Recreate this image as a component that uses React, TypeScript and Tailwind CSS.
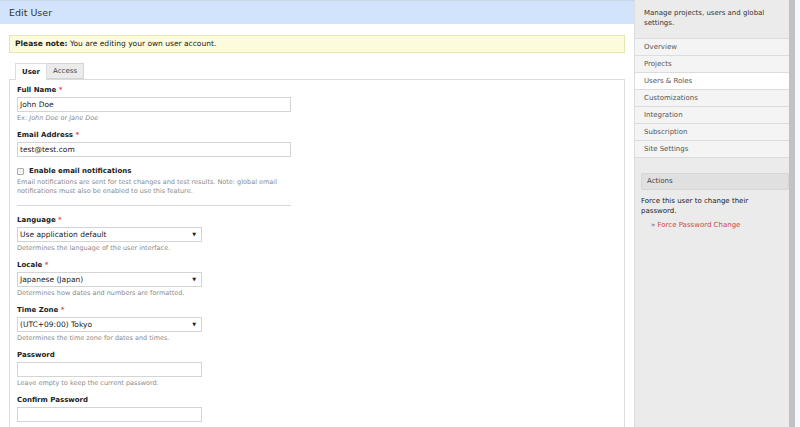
import React from 'react'

const navItems = ['Overview', 'Projects', 'Users & Roles', 'Customizations', 'Integration', 'Subscription', 'Site Settings']

const Label: React.FC<{ text: string; required?: boolean }> = ({ text, required }) => (
  <div className="text-[7px] leading-[9px] font-bold text-[#222]">
    {text}
    {required && <span className="text-[#d9534f]"> *</span>}
  </div>
)

const Hint: React.FC<{ children: React.ReactNode }> = ({ children }) => (
  <div className="mt-[2px] text-[6.5px] leading-[9px] text-[#8a8a8a]">{children}</div>
)

const TextInput: React.FC<{ value?: string; width: string }> = ({ value, width }) => (
  <div className={`mt-[2px] h-[15px] ${width} border border-[#d4d4d4] bg-white px-[2px] text-[7.5px] leading-[13px] text-[#222]`}>
    {value}
  </div>
)

const Select: React.FC<{ value: string }> = ({ value }) => (
  <div className="mt-[2px] flex h-[15px] w-[185px] items-center justify-between border border-[#d4d4d4] bg-white pl-[2px] pr-[5px] text-[7.5px] text-[#222]">
    <span>{value}</span>
    <span className="text-[5px]">▼</span>
  </div>
)

export default function App() {
  return (
    <div className="flex h-[427px] w-[800px] overflow-hidden bg-white font-['DejaVu_Sans',sans-serif]">
      {/* main column */}
      <div className="flex w-[635px] flex-col border-r border-[#dcdcdc]">
        <div className="h-[24px] border-t border-[#c9d6e6] bg-[#d2e4fb] pl-[9px] text-[9.5px] leading-[23px] text-[#333]">
          Edit User
        </div>

        <div className="px-[9px] pr-[9px]">
          <div className="mt-[11px] h-[18px] border border-[#e6e6b2] bg-[#fcfcdc] pl-[5px] text-[7.5px] leading-[16px] text-[#222]">
            <span className="font-bold">Please note:</span> You are editing your own user account.
          </div>

          <div className="mt-[10px] flex pl-[6px] text-[7px]">
            <div className="relative z-10 h-[17px] border border-b-0 border-[#dcdcdc] bg-white px-[6px] font-bold leading-[16px] text-[#222]">
              User
            </div>
            <div className="h-[16px] border border-l-0 border-[#d4d4d4] bg-[#ebebeb] px-[6px] leading-[15px] text-[#444]">
              Access
            </div>
          </div>

          <div className="-mt-px h-[400px] border border-[#dcdcdc] px-[7px] pt-[6px]">
            <Label text="Full Name" required />
            <TextInput value="John Doe" width="w-[274px]" />
            <Hint>
              Ex: <i>John Doe</i> or <i>Jane Doe</i>
            </Hint>

            <div className="mt-[8px]">
              <Label text="Email Address" required />
              <TextInput value="test@test.com" width="w-[274px]" />
            </div>

            <div className="mt-[10px] flex items-center gap-[5px]">
              <span className="h-[7px] w-[7px] rounded-[1px] border border-[#aaa] bg-[#f4f4f4]" />
              <span className="text-[7px] leading-[9px] font-bold text-[#222]">Enable email notifications</span>
            </div>
            <div className="mt-[2px] w-[280px] text-[6.5px] leading-[9px] text-[#8a8a8a]">
              Email notifications are sent for test changes and test results. Note: global email notifications must also be enabled to use this feature.
            </div>

            <div className="mt-[9px] w-[274px] border-t border-[#d8d8d8]" />

            <div className="mt-[10px]">
              <Label text="Language" required />
              <Select value="Use application default" />
              <Hint>Determines the language of the user interface.</Hint>
            </div>

            <div className="mt-[8px]">
              <Label text="Locale" required />
              <Select value="Japanese (Japan)" />
              <Hint>Determines how dates and numbers are formatted.</Hint>
            </div>

            <div className="mt-[8px]">
              <Label text="Time Zone" required />
              <Select value="(UTC+09:00) Tokyo" />
              <Hint>Determines the time zone for dates and times.</Hint>
            </div>

            <div className="mt-[8px]">
              <Label text="Password" />
              <TextInput width="w-[185px]" />
              <Hint>Leave empty to keep the current password.</Hint>
            </div>

            <div className="mt-[8px]">
              <Label text="Confirm Password" />
              <TextInput width="w-[185px]" />
            </div>
          </div>
        </div>
      </div>

      {/* sidebar */}
      <div className="flex w-[154px] flex-col bg-[#ebebeb]">
        <div className="px-[9px] pt-[8px] pb-[10px] text-[7px] leading-[10px] text-[#333]">
          Manage projects, users and global settings.
        </div>
        <div className="border-t border-[#dcdcdc]">
          {navItems.map(item => (
            <div
              key={item}
              className={`h-[17px] border-b border-[#dcdcdc] pl-[9px] text-[7px] leading-[16px] text-[#555] ${
                item === 'Users & Roles' ? 'bg-white' : 'bg-[#f4f4f4]'
              }`}
            >
              {item}
            </div>
          ))}
        </div>

        <div className="mt-[15px] ml-[6px] h-[17px] rounded-[2px] border border-[#d6d6d6] bg-[#e0e0e0] pl-[5px] text-[7px] leading-[15px] text-[#444]">
          Actions
        </div>
        <div className="mt-[6px] px-[6px] text-[7px] leading-[10px] text-[#222]">
          Force this user to change their password.
        </div>
        <div className="mt-[4px] pl-[16px] text-[7px] leading-[10px] text-[#d64545]">
          <span className="text-[#666]">»</span> Force Password Change
        </div>
      </div>

      <div className="w-[6px] bg-[#c2c2c2]" />
      <div className="flex-1 bg-[#f6f9fd]" />
    </div>
  )
}
